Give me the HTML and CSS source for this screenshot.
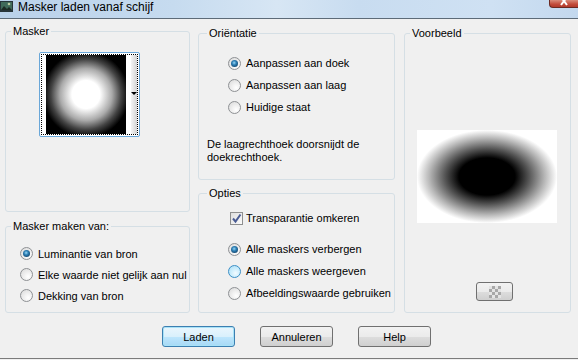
FILE: index.html
```html
<!DOCTYPE html>
<html lang="nl">
<head>
    <meta charset="UTF-8">
    <meta name="viewport" content="width=device-width, initial-scale=1.0">
    <title>Masker laden vanaf schijf</title>
    <link rel="stylesheet" href="styles.css">
</head>
<body>
    <div class="window">
        <!-- Title bar -->
        <div class="titlebar">
            <svg class="app-icon" width="14" height="13" viewBox="0 0 14 13">
                <rect x="0" y="1" width="13" height="11" fill="#27353a"/>
                <rect x="1" y="2" width="11" height="8" fill="#3f6a5a"/>
                <path d="M1 10 L4 6 L7 9 L9 7 L12 10 Z" fill="#1c2a24"/>
                <circle cx="9" cy="4" r="1.3" fill="#b9c9a0"/>
            </svg>
            <span class="title">Masker laden vanaf schijf</span>
            <span class="close-btn">
                <svg width="12" height="8" viewBox="0 0 12 8"><path d="M3 -3 L9 5 M9 -3 L3 5" stroke="#fff" stroke-width="2"/></svg>
            </span>
        </div>

        <div class="dialog">
            <div class="columns">
                <!-- Left column -->
                <div class="col col-left">
                    <fieldset class="group group-mask">
                        <legend>Masker</legend>
                        <div class="mask-picker">
                            <div class="mask-focus">
                                <div class="mask-img"></div>
                                <div class="mask-gap"></div>
                                <div class="mask-drop"><span class="drop-arrow"></span></div>
                            </div>
                        </div>
                    </fieldset>
                    <fieldset class="group group-source">
                        <legend>Masker maken van:</legend>
                        <label class="option"><span class="radio checked"></span>Luminantie van bron</label>
                        <label class="option"><span class="radio"></span>Elke waarde niet gelijk aan nul</label>
                        <label class="option"><span class="radio"></span>Dekking van bron</label>
                    </fieldset>
                </div>

                <!-- Middle column -->
                <div class="col col-mid">
                    <fieldset class="group group-orient">
                        <legend>Oriëntatie</legend>
                        <label class="option"><span class="radio checked"></span>Aanpassen aan doek</label>
                        <label class="option"><span class="radio"></span>Aanpassen aan laag</label>
                        <label class="option"><span class="radio"></span>Huidige staat</label>
                        <p class="note">De laagrechthoek doorsnijdt de doekrechthoek.</p>
                    </fieldset>
                    <fieldset class="group group-options">
                        <legend>Opties</legend>
                        <label class="option check-row">
                            <span class="checkbox">
                                <svg width="11" height="11" viewBox="0 0 11 11"><path d="M2 5.5 L4.5 8.5 L9.5 1.5" fill="none" stroke="#4a5c94" stroke-width="2"/></svg>
                            </span>Transparantie omkeren
                        </label>
                        <label class="option first-radio"><span class="radio checked"></span>Alle maskers verbergen</label>
                        <label class="option"><span class="radio hover"></span>Alle maskers weergeven</label>
                        <label class="option"><span class="radio"></span>Afbeeldingswaarde gebruiken</label>
                    </fieldset>
                </div>

                <!-- Right column -->
                <div class="col col-right">
                    <fieldset class="group group-preview">
                        <legend>Voorbeeld</legend>
                        <div class="preview"></div>
                        <button class="checker-btn" type="button"><span class="checker"></span></button>
                    </fieldset>
                </div>
            </div>

            <div class="buttons">
                <button class="btn default" type="button">Laden</button>
                <button class="btn" type="button">Annuleren</button>
                <button class="btn" type="button">Help</button>
            </div>
        </div>
    </div>
</body>
</html>
```

FILE: styles.css
```css
/* General */
* {
    margin: 0;
    padding: 0;
    box-sizing: border-box;
}

body {
    font-family: 'Liberation Sans', Arial, sans-serif;
    font-size: 11px;
    color: #000;
    background: #f0f0f0;
    width: 578px;
    height: 360px;
    overflow: hidden;
}

.window {
    height: 359px;
    display: flex;
    flex-direction: column;
    border-bottom: 1px solid #7b7b7b;
}

/* Title bar */
.titlebar {
    height: 19px;
    display: flex;
    align-items: flex-start;
    border-bottom: 1px solid #5d6b78;
    background: linear-gradient(90deg, #b9d1ea 0%, #c6dbef 30%, #d7e6f4 48%, #c8dcf0 62%, #cfe1f3 85%, #c3d8ee 100%);
}

.app-icon {
    flex: none;
}

.title {
    margin-left: 4px;
    font-size: 12px;
    line-height: 14px;
    white-space: nowrap;
}

.close-btn {
    margin-left: auto;
    width: 29px;
    height: 8px;
    border: 1px solid #6b2a22;
    border-top: none;
    border-right: none;
    border-radius: 0 0 0 4px;
    background: linear-gradient(#d98b7a, #c24b3a 60%, #b13a2c);
    overflow: hidden;
    display: flex;
    justify-content: center;
}

/* Dialog body */
.dialog {
    flex: 1;
    padding: 6px 0 0 5px;
}

.columns {
    display: flex;
    gap: 8px;
}

.col {
    display: flex;
    flex-direction: column;
}

.col-left {
    width: 185px;
    gap: 8px;
}

.col-mid {
    width: 197px;
    padding-top: 2px;
    gap: 7px;
}

.col-right {
    width: 167px;
    padding-top: 2px;
    margin-left: 1px;
}

/* Group boxes */
.group {
    border: 1px solid #d5dfe5;
    border-radius: 3px;
    padding: 0 4px;
    min-width: 0;
}

.group legend {
    padding: 0 2px;
    margin-left: 1px;
    line-height: 13px;
}

.group-mask { height: 187px; }
.group-source { height: 93px; }
.group-orient { height: 153px; }
.group-options { height: 126px; }
.group-preview { height: 286px; }

.group-orient legend,
.group-options legend {
    margin-left: 4px;
}

/* Mask thumbnail picker */
.mask-picker {
    margin: 14px 0 0 29px;
    width: 101px;
    height: 85px;
    border: 1px solid #6aa7d8;
    border-radius: 2px;
    padding: 1px;
    background: #fff;
}

.mask-focus {
    height: 100%;
    display: flex;
    border: 1px dotted #000;
    padding: 0 0 0 4px;
    background: #fff;
}

.mask-img {
    width: 81px;
    background: radial-gradient(circle at 50% 50%, #fff 0, #fff 14px, #aaa 26px, #444 35px, #000 43px);
}

.mask-gap {
    width: 5px;
    background: #fff;
}

.mask-drop {
    flex: 1;
    background: linear-gradient(90deg, #f4f4f4, #d4d4d4);
    display: flex;
    justify-content: center;
    align-items: center;
}

.drop-arrow {
    width: 0;
    height: 0;
    border-left: 3px solid transparent;
    border-right: 3px solid transparent;
    border-top: 3px solid #000;
    margin-top: -2px;
}

/* Radio and checkbox rows */
.option {
    display: flex;
    align-items: center;
    gap: 5px;
    height: 22px;
    white-space: nowrap;
}

.group-source .option {
    height: 21px;
    margin-left: 10px;
}

.group-source .option:first-of-type {
    margin-top: 10px;
}

.group-orient .option {
    margin-left: 25px;
}

.group-orient .option:first-of-type {
    margin-top: 12px;
}

.group-options .option {
    margin-left: 25px;
}

.group-options .check-row {
    margin-top: 7px;
    margin-left: 27px;
    gap: 3px;
}

.group-options .first-radio {
    margin-top: 9px;
}

.radio {
    position: relative;
    flex: none;
    width: 13px;
    height: 13px;
    border-radius: 50%;
    border: 1px solid #8e9194;
    background: radial-gradient(circle at 65% 70%, #ffffff 0, #f2f2f2 35%, #d8d8d8 100%);
}

.radio.checked::after {
    content: '';
    position: absolute;
    top: 2px;
    left: 2px;
    width: 7px;
    height: 7px;
    border-radius: 50%;
    background: radial-gradient(circle at 45% 40%, #9ad8f5 0, #2f82b8 35%, #0e3c62 85%);
}

.radio.hover {
    border-color: #3c8fc6;
    background: radial-gradient(circle at 60% 65%, #f2fbff 0, #cdeefc 45%, #a6dcf5 100%);
}

.checkbox {
    flex: none;
    width: 13px;
    height: 13px;
    border: 1px solid #8e8f8f;
    background: linear-gradient(135deg, #dedede, #fbfbfb);
    display: flex;
    align-items: center;
    justify-content: center;
}

.note {
    margin: 20px 0 0 4px;
    line-height: 13px;
    width: 185px;
}

/* Preview */
.preview {
    margin: 90px 0 0 8px;
    width: 140px;
    height: 93px;
    background: radial-gradient(ellipse closest-side, #000 0, #000 40%, #555 60%, #b5b5b5 82%, #fff 100%);
}

.checker-btn {
    margin: 59px 0 0 67px;
    width: 37px;
    height: 19px;
    border: 1px solid #707070;
    border-radius: 3px;
    background: linear-gradient(#f2f2f2 0, #ebebeb 50%, #dddddd 51%, #cfcfcf 100%);
    display: flex;
    align-items: center;
    justify-content: center;
}

.checker {
    width: 12px;
    height: 12px;
    background-color: #e4e4e4;
    background-image:
        linear-gradient(45deg, #a8a8a8 25%, transparent 25%, transparent 75%, #a8a8a8 75%),
        linear-gradient(45deg, #a8a8a8 25%, transparent 25%, transparent 75%, #a8a8a8 75%);
    background-size: 6px 6px;
    background-position: 0 0, 3px 3px;
}

/* Bottom buttons */
.buttons {
    display: flex;
    gap: 25px;
    margin-top: 13px;
    padding-left: 157px;
}

.btn {
    width: 73px;
    height: 21px;
    font-family: 'Liberation Sans', Arial, sans-serif;
    font-size: 11px;
    color: #000;
    border: 1px solid #707070;
    border-radius: 3px;
    background: linear-gradient(#f2f2f2 0, #ebebeb 50%, #dddddd 51%, #cfcfcf 100%);
}

.btn.default {
    border-color: #3c7fb1;
    box-shadow: inset 0 0 0 1px #a8e2f7;
    background: linear-gradient(#eaf6fd 0, #d9f0fc 50%, #bee6fd 51%, #a7d9f5 100%);
}
```
